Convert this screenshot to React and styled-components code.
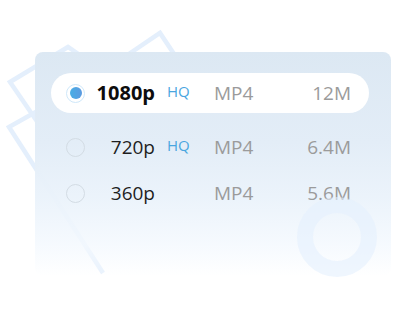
import React from "react";
import styled, { createGlobalStyle } from "styled-components";

const Global = createGlobalStyle`
  html, body { margin: 0; padding: 0; background: #ffffff; }
  body { font-family: "Open Sans", "Noto Sans", sans-serif; }
`;

const Stage = styled.div`
  position: relative;
  width: 418px;
  height: 322px;
  box-sizing: border-box;
  padding: 52px 27px 47px 35px;
  overflow: hidden;
`;

const Backdrop = styled.svg`
  position: absolute;
  left: 0;
  top: 0;
  z-index: 0;
  pointer-events: none;
`;

const Overlay = styled.svg`
  position: absolute;
  left: 0;
  top: 0;
  z-index: 2;
  pointer-events: none;
`;

const Panel = styled.div`
  position: relative;
  z-index: 1;
  width: 356px;
  height: 224px;
  box-sizing: border-box;
  padding: 21px 22px 0 16px;
  border-radius: 8px;
  background: linear-gradient(
    to bottom,
    rgb(220, 232, 243) 0%,
    rgb(227, 237, 247) 40%,
    rgba(235, 243, 251, 0.96) 66%,
    rgba(244, 249, 254, 0.85) 86%,
    rgba(255, 255, 255, 0.2) 100%
  );
`;

const List = styled.div`
  display: flex;
  flex-direction: column;
`;

const Row = styled.div`
  display: grid;
  grid-template-columns: 19px 70px 59px 1fr auto;
  align-items: center;
  height: ${(p) => (p.$active ? "40px" : "46px")};
  margin-bottom: ${(p) => (p.$active ? "11px" : "0")};
  padding: 0 18px 0 15px;
  border-radius: 20px;
  background: ${(p) => (p.$active ? "#ffffff" : "transparent")};
`;

const Radio = styled.span`
  box-sizing: border-box;
  width: 19px;
  height: 19px;
  border-radius: 50%;
  display: flex;
  align-items: center;
  justify-content: center;
  border: ${(p) => (p.$on ? "1.5px solid #cfe8fa" : "1px solid #d3dce4")};
  background: ${(p) => (p.$on ? "#ffffff" : "transparent")};
`;

const Dot = styled.span`
  width: 12px;
  height: 12px;
  border-radius: 50%;
  background: linear-gradient(90deg, #49aee5 0%, #5c9ae0 100%);
`;

const Res = styled.span`
  text-align: right;
  font-size: ${(p) => (p.$bold ? "20px" : "19px")};
  line-height: 26px;
  font-weight: ${(p) => (p.$bold ? 700 : 400)};
  color: ${(p) => (p.$bold ? "#0d0d0d" : "#1e1e1e")};
`;

const Badge = styled.span`
  padding-left: 12px;
  font-size: 15px;
  line-height: 20px;
  color: #4aa6df;
  margin-bottom: 5px;
`;

const Format = styled.span`
  font-size: 19px;
  line-height: 26px;
  color: #9b9b9b;
`;

const Size = styled.span`
  text-align: right;
  font-size: 19px;
  line-height: 26px;
  color: #9b9b9b;
`;

const rows = [
  { res: "1080p", hq: true, fmt: "MP4", size: "12M", active: true },
  { res: "720p", hq: true, fmt: "MP4", size: "6.4M" },
  { res: "360p", hq: false, fmt: "MP4", size: "5.6M" },
];

export default function App() {
  return (
    <>
      <Global />
      <Stage>
        <Backdrop width="418" height="322" viewBox="0 0 418 322">
          <g fill="none" stroke="#e4effc" strokeWidth="4.5" strokeLinejoin="miter">
            <polyline points="95,77 160,33 182,66" />
            <polyline points="45,133 10,82 68,47 90,62" />
            <polyline points="50,104 9,127 103,273" />
          </g>
        </Backdrop>
        <Panel>
          <List>
            {rows.map((r) => (
              <Row key={r.res} $active={r.active}>
                <Radio $on={r.active}>{r.active && <Dot />}</Radio>
                <Res $bold={r.active}>{r.res}</Res>
                <Badge>{r.hq ? "HQ" : ""}</Badge>
                <Format>{r.fmt}</Format>
                <Size>{r.size}</Size>
              </Row>
            ))}
          </List>
        </Panel>
        <Overlay width="418" height="322" viewBox="0 0 418 322">
          <circle cx="337" cy="237" r="32" fill="none" stroke="rgba(228,240,253,0.6)" strokeWidth="16" />
        </Overlay>
      </Stage>
    </>
  );
}
